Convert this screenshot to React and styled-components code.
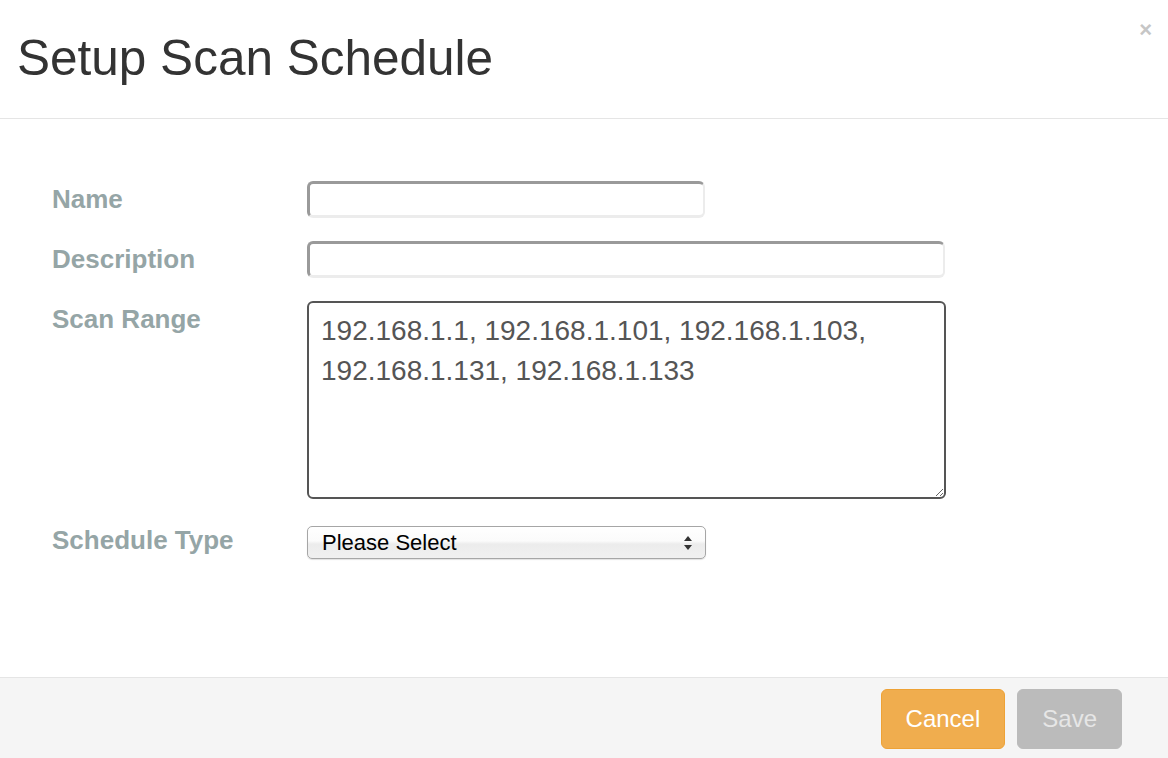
import { styled, createGlobalStyle } from 'styled-components';

const GlobalStyle = createGlobalStyle`
  html, body {
    margin: 0;
    padding: 0;
    background: #fff;
  }

  body {
    font-family: "Liberation Sans", Arial, sans-serif;
  }
`;

const Modal = styled.div`
  display: flex;
  flex-direction: column;
  height: 100vh;
  background: #fff;
`;

const Header = styled.header`
  display: flex;
  justify-content: space-between;
  align-items: flex-start;

  height: 118px;
  padding: 0 16px 0 17px;
  border-bottom: 1px solid #e5e5e5;
  box-sizing: content-box;
`;

const Title = styled.h3`
  margin: 0;
  padding-top: 28px;
  color: #333;
  font-size: 49.5px;
  font-weight: normal;
  line-height: 60px;
`;

const CloseButton = styled.button`
  margin-top: 18px;
  padding: 0;
  background: transparent;
  border: none;
  color: #c6c6c6;
  font-family: "Liberation Sans", Arial, sans-serif;
  font-size: 22px;
  font-weight: bold;
  line-height: 24px;
  cursor: pointer;
`;

const Body = styled.div`
  flex: 1;
  display: flex;
  flex-direction: column;
  gap: 23px;
  padding: 62px 0 0 52px;
`;

const Row = styled.div`
  display: grid;
  grid-template-columns: 255px 1fr;
  align-items: start;
`;

const Label = styled.label`
  color: #95a5a6;
  font-size: 26px;
  font-weight: bold;
  line-height: 37px;
`;

const TextInput = styled.input`
  box-sizing: border-box;
  width: ${(p) => p.$width}px;
  height: 37px;
  margin: 0;
  padding: 0 12px;
  background: #fff;
  border-style: solid;
  border-width: 3px 2px 3px 3px;
  border-color: #9a9a9a #ececec #ececec #9a9a9a;
  border-radius: 6px;
  font-family: "Liberation Sans", Arial, sans-serif;
  font-size: 24px;
  outline: none;
`;

const TextArea = styled.textarea`
  box-sizing: border-box;
  width: 639px;
  height: 198px;
  margin: 0;
  padding: 8px 12px;
  background: #fff;
  border: 2px solid #555;
  border-radius: 6px;
  color: #555;
  font-family: "Liberation Sans", Arial, sans-serif;
  font-size: 28px;
  line-height: 40px;
  outline: none;
  resize: both;
`;

const SelectWrap = styled.div`
  position: relative;
  width: 399px;
  margin-top: 4px;
`;

const Select = styled.select`
  box-sizing: border-box;
  width: 100%;
  height: 33px;
  margin: 0;
  padding: 0 30px 0 14px;
  appearance: none;
  background: linear-gradient(#ffffff 0%, #fbfbfb 45%, #ececec 55%, #f0f0f0 100%);
  border: 1px solid #a6a6a6;
  border-radius: 5px;
  box-shadow: 0 1px 1px rgba(0, 0, 0, 0.12);
  color: #000;
  font-family: "Liberation Sans", Arial, sans-serif;
  font-size: 22px;
  line-height: 31px;
  outline: none;
`;

const Arrows = styled.svg`
  position: absolute;
  top: 10px;
  right: 14px;
  pointer-events: none;
`;

const Footer = styled.footer`
  display: flex;
  justify-content: flex-end;
  gap: 12px;

  height: 81px;
  padding: 11px 46px 0 0;
  box-sizing: border-box;
  background: #f5f5f5;
  border-top: 1px solid #e5e5e5;
`;

const Button = styled.button`
  height: 60px;
  padding: 0 24px;
  background: ${(p) => (p.$disabled ? '#bbbbbb' : '#f0ad4e')};
  border: 1px solid ${(p) => (p.$disabled ? '#bbbbbb' : '#eea236')};
  border-radius: 6px;
  color: ${(p) => (p.$disabled ? '#e6e6e6' : '#fff')};
  font-family: "Liberation Sans", Arial, sans-serif;
  font-size: 24px;
  cursor: ${(p) => (p.$disabled ? 'default' : 'pointer')};
`;

export default function App() {
  return (
    <>
      <GlobalStyle />
      <Modal>
        <Header>
          <Title>Setup Scan Schedule</Title>
          <CloseButton aria-label="Close">×</CloseButton>
        </Header>

        <Body>
          <Row>
            <Label>Name</Label>
            <TextInput $width={398} />
          </Row>
          <Row>
            <Label>Description</Label>
            <TextInput $width={638} />
          </Row>
          <Row>
            <Label>Scan Range</Label>
            <TextArea
              defaultValue="192.168.1.1, 192.168.1.101, 192.168.1.103, 192.168.1.131, 192.168.1.133"
            />
          </Row>
          <Row>
            <Label>Schedule Type</Label>
            <SelectWrap>
              <Select defaultValue="">
                <option value="">Please Select</option>
                <option value="daily">Daily</option>
                <option value="weekly">Weekly</option>
                <option value="monthly">Monthly</option>
              </Select>
              <Arrows width="8" height="14" viewBox="0 0 8 14">
                <path d="M4 0 L8 5 L0 5 Z" fill="#333" />
                <path d="M0 9 L8 9 L4 14 Z" fill="#333" />
              </Arrows>
            </SelectWrap>
          </Row>
        </Body>

        <Footer>
          <Button>Cancel</Button>
          <Button $disabled disabled>Save</Button>
        </Footer>
      </Modal>
    </>
  );
}
